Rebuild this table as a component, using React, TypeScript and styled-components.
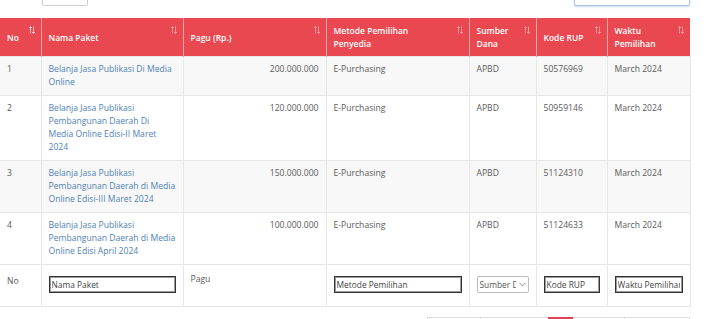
import React from "react";
import styled, { createGlobalStyle } from "styled-components";

type Paket = {
  no: number;
  nama: string;
  pagu: string;
  metode: string;
  sumber: string;
  kode: string;
  waktu: string;
};

const rows: Paket[] = [
  {
    no: 1,
    nama: "Belanja Jasa Publikasi Di Media Online",
    pagu: "200.000.000",
    metode: "E-Purchasing",
    sumber: "APBD",
    kode: "50576969",
    waktu: "March 2024",
  },
  {
    no: 2,
    nama: "Belanja Jasa Publikasi Pembangunan Daerah Di Media Online Edisi-II Maret 2024",
    pagu: "120.000.000",
    metode: "E-Purchasing",
    sumber: "APBD",
    kode: "50959146",
    waktu: "March 2024",
  },
  {
    no: 3,
    nama: "Belanja Jasa Publikasi Pembangunan Daerah di Media Online Edisi-III Maret 2024",
    pagu: "150.000.000",
    metode: "E-Purchasing",
    sumber: "APBD",
    kode: "51124310",
    waktu: "March 2024",
  },
  {
    no: 4,
    nama: "Belanja Jasa Publikasi Pembangunan Daerah di Media Online Edisi April 2024",
    pagu: "100.000.000",
    metode: "E-Purchasing",
    sumber: "APBD",
    kode: "51124633",
    waktu: "March 2024",
  },
];

const columns = [
  { label: ["No"], width: 41, active: true },
  { label: ["Nama Paket"], width: 142 },
  { label: ["Pagu (Rp.)"], width: 143 },
  { label: ["Metode Pemilihan", "Penyedia"], width: 143 },
  { label: ["Sumber", "Dana"], width: 67 },
  { label: ["Kode RUP"], width: 71 },
  { label: ["Waktu", "Pemilihan"], width: 83 },
];

const GlobalStyle = createGlobalStyle`
  html, body {
    margin: 0;
    padding: 0;
    background: #ffffff;
    overflow: hidden;
  }
  body {
    font-family: "Open Sans", "Noto Sans", sans-serif;
    color: #555;
  }
`;

const Page = styled.div`
  width: 708px;
  height: 319px;
  overflow: hidden;
`;

const TopBar = styled.div`
  width: 690px;
  height: 30px;
  margin-top: -24px;
  margin-bottom: 12px;
  display: flex;
  align-items: flex-end;
  justify-content: space-between;
`;

const LengthSelect = styled.div`
  margin-left: 42px;
  width: 46px;
  height: 22px;
  box-sizing: border-box;
  border: 1px solid #cfcfcf;
  border-radius: 2px;
  background: #fff;
`;

const Search = styled.div`
  width: 116px;
  height: 22px;
  box-sizing: border-box;
  border: 1px solid #a9c4dc;
  border-radius: 2px;
  box-shadow: 0 1px 2px rgba(100, 150, 200, 0.35);
  background: #fff;
`;

const Table = styled.table`
  width: 690px;
  border-collapse: collapse;
  table-layout: fixed;
  font-size: 8.6px;
  line-height: 13px;
`;

const Th = styled.th`
  position: relative;
  background: #ea4850;
  color: #fff;
  font-weight: 600;
  font-size: 8.5px;
  text-align: left;
  vertical-align: middle;
  padding: 6px 20px 6px 7px;
  height: 26px;
  border-right: 1px solid #f4a3a7;
  &:last-child {
    border-right: none;
  }
`;

const HeadLine = styled.span`
  display: block;
  white-space: nowrap;
`;

const SortIcon = styled.svg<{ $active?: boolean }>`
  position: absolute;
  top: 8px;
  right: 6px;
  width: 6px;
  height: 8px;
  opacity: ${({ $active }) => ($active ? 0.75 : 0.45)};
`;

const Tr = styled.tr<{ $striped?: boolean }>`
  background: ${({ $striped }) => ($striped ? "#f8f8f8" : "#ffffff")};
`;

const Td = styled.td<{ $align?: "left" | "right" }>`
  padding: 6px 7px;
  vertical-align: top;
  text-align: ${({ $align }) => $align ?? "left"};
  border: 1px solid #e6e6e6;
  border-left-color: #ececec;
  color: #5a5a5a;
  &:first-child {
    border-left: none;
  }
`;

const PaketLink = styled.a`
  color: #4f82b6;
  text-decoration: none;
`;

const FootTd = styled.td`
  padding: 8px 7px 8px;
  height: 23px;
  vertical-align: top;
  border: 1px solid #e6e6e6;
  color: #5a5a5a;
  &:first-child {
    border-left: none;
    padding-top: 10px;
  }
`;

const FilterInput = styled.input`
  box-sizing: border-box;
  display: block;
  width: 100%;
  height: 17px;
  margin-top: 3px;
  padding: 0 2px;
  border: 1px solid #333;
  box-shadow: inset 0 0 0 1px #9a9a9a;
  font-family: inherit;
  font-size: 8.4px;
  color: #444;
  background: #fff;
  &::placeholder {
    color: #444;
  }
`;

const SelectWrap = styled.div`
  position: relative;
  margin-top: 3px;
`;

const FilterSelect = styled.select`
  box-sizing: border-box;
  display: block;
  width: 100%;
  height: 17px;
  padding: 0 12px 0 2px;
  border: 1px solid #bdbdbd;
  border-radius: 2px;
  appearance: none;
  font-family: inherit;
  font-size: 8.4px;
  color: #555;
  background: #fff;
`;

const Chevron = styled.svg`
  position: absolute;
  right: 3px;
  top: 6px;
  width: 7px;
  height: 5px;
  pointer-events: none;
`;

const BottomBar = styled.div`
  width: 690px;
  margin-top: 10px;
  display: flex;
  justify-content: space-between;
  align-items: flex-start;
  font-size: 8.4px;
`;

const Info = styled.div`
  color: #777;
  padding-top: 3px;
`;

const Pager = styled.div`
  display: flex;
`;

const PageButton = styled.span<{ $w: number; $active?: boolean }>`
  width: ${({ $w }) => $w}px;
  height: 22px;
  box-sizing: border-box;
  display: flex;
  align-items: center;
  justify-content: center;
  border: 1px solid ${({ $active }) => ($active ? "#e0444c" : "#dddddd")};
  margin-left: -1px;
  background: ${({ $active }) => ($active ? "#e0444c" : "#fff")};
  color: ${({ $active }) => ($active ? "#fff" : "#888")};
`;

const Sort: React.FC<{ active?: boolean }> = ({ active }) => (
  <SortIcon $active={active} viewBox="0 0 6 8">
    <path d="M1.5 0.5 L1.5 7.5 M0 2 L1.5 0.5 L3 2" stroke="#fff" strokeWidth="0.9" fill="none" />
    <path d="M4.5 0.5 L4.5 7.5 M3 6 L4.5 7.5 L6 6" stroke="#fff" strokeWidth="0.9" fill="none" />
  </SortIcon>
);

export default function App() {
  return (
    <Page>
      <GlobalStyle />
      <TopBar>
        <LengthSelect />
        <Search />
      </TopBar>
      <Table>
        <colgroup>
          {columns.map((c) => (
            <col key={c.label.join(" ")} style={{ width: c.width }} />
          ))}
        </colgroup>
        <thead>
          <tr>
            {columns.map((c) => (
              <Th key={c.label.join(" ")}>
                {c.label.map((l) => (
                  <HeadLine key={l}>{l}</HeadLine>
                ))}
                <Sort active={c.active} />
              </Th>
            ))}
          </tr>
        </thead>
        <tbody>
          {rows.map((r, i) => (
            <Tr key={r.no} $striped={i % 2 === 0}>
              <Td>{r.no}</Td>
              <Td>
                <PaketLink href="#">{r.nama}</PaketLink>
              </Td>
              <Td $align="right">{r.pagu}</Td>
              <Td>{r.metode}</Td>
              <Td>{r.sumber}</Td>
              <Td>{r.kode}</Td>
              <Td>{r.waktu}</Td>
            </Tr>
          ))}
        </tbody>
        <tfoot>
          <tr>
            <FootTd>No</FootTd>
            <FootTd>
              <FilterInput placeholder="Nama Paket" />
            </FootTd>
            <FootTd>Pagu</FootTd>
            <FootTd>
              <FilterInput placeholder="Metode Pemilihan" />
            </FootTd>
            <FootTd>
              <SelectWrap>
                <FilterSelect defaultValue="">
                  <option value="">Sumber Dana</option>
                  <option value="APBD">APBD</option>
                </FilterSelect>
                <Chevron viewBox="0 0 7 5">
                  <path d="M0.5 0.8 L3.5 4 L6.5 0.8" stroke="#888" strokeWidth="0.9" fill="none" />
                </Chevron>
              </SelectWrap>
            </FootTd>
            <FootTd>
              <FilterInput placeholder="Kode RUP" />
            </FootTd>
            <FootTd>
              <FilterInput placeholder="Waktu Pemilihan" />
            </FootTd>
          </tr>
        </tfoot>
      </Table>
      <BottomBar>
        <Info>Showing 1 to 4 of 4 entries</Info>
        <Pager>
          <PageButton $w={54}>First</PageButton>
          <PageButton $w={69}>Previous</PageButton>
          <PageButton $w={26} $active>
            1
          </PageButton>
          <PageButton $w={52}>Next</PageButton>
          <PageButton $w={66}>Last</PageButton>
        </Pager>
      </BottomBar>
    </Page>
  );
}
